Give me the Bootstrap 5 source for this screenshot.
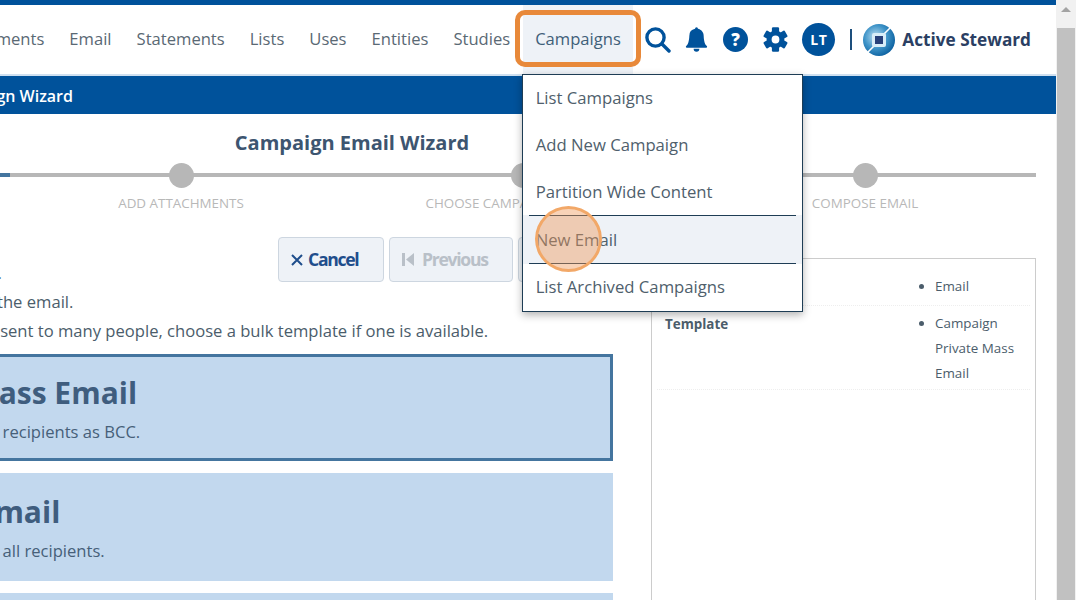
<!DOCTYPE html>
<html lang="en">
<head>
    <meta charset="UTF-8">
    <meta name="viewport" content="width=device-width, initial-scale=1.0">
    <title>Campaign Email Wizard</title>
    <link href="https://cdn.jsdelivr.net/npm/bootstrap@5.3.0/dist/css/bootstrap.min.css" rel="stylesheet">
    <style>
        html, body { height: 100%; overflow: hidden; }
        body { font-family: "Open Sans", "Liberation Sans", sans-serif; font-size: 16.6px; color: #4b5d6b; background: #fff; }
        .app-frame { height: 600px; }
        .app-main { width: 1056px; overflow: hidden; border-top: 5px solid #00529b; }

        /* scrollbar */
        .fake-scroll { width: 20px; background: #f1f1f1; }
        .fake-scroll-arrow { height: 21px; }
        .fake-scroll-arrow::before { content: ""; display: block; margin: 7px auto 0; width: 0; border: 5px solid transparent; border-top: 0; border-bottom-color: #a3a3a3; }
        .fake-scroll-thumb { margin: 0 1px; background: #c1c1c1; }

        /* top nav */
        .top-nav { height: 71px; border-bottom: 2px solid #cfe0f0; background: #fff; }
        .top-links { height: 69px; flex-wrap: nowrap; }
        .top-links .nav-link { height: 71px; display: flex; align-items: center; padding: 0 12.5px 2px; color: #5a6974; white-space: nowrap; }
        .top-links .active-link { background: #eef2f7; color: #3f6079; }
        .orange-ring { position: absolute; left: -8px; top: 5px; width: 126px; height: 57px; border: 5px solid #e8893a; border-radius: 10px; pointer-events: none; }
        .top-tools { padding-right: 25px; }
        .ico-search { width: 26px; height: 26px; margin-left: 12px; margin-right: 14px; }
        .ico-bell { width: 23px; height: 25px; margin-right: 15px; }
        .ico-help { width: 25px; height: 25px; margin-right: 15px; }
        .ico-gear { width: 25px; height: 25px; margin-right: 14px; }
        .user-avatar { width: 33px; height: 33px; border-radius: 50%; background: #00529b; color: #fff; font-size: 14px; font-weight: 700; letter-spacing: .5px; margin-right: 15px; }
        .tool-sep { width: 2px; height: 21px; background: #1d4f7d; margin-right: 11px; }
        .brand-logo { width: 32px; height: 32px; margin-right: 7px; }
        .brand-name { font-size: 17.2px; font-weight: 700; color: #2b3f63; white-space: nowrap; }

        /* dropdown */
        .camp-menu { width: 281px; margin-top: 0 !important; top: 100%; left: -1px; padding: 0; border: 1px solid #1e3d55; border-radius: 0; box-shadow: 0 3px 8px rgba(0,0,0,.3); }
        .camp-menu .dropdown-item { padding: 0 13px; height: 47px; line-height: 46px; color: #4f606c; font-size: 16.7px; }
        .camp-menu .dropdown-divider { margin: 0 6px; border-top: 1px solid #1e3d55; opacity: 1; }
        .camp-item-on { background: #eef2f7; margin: -1px 0 0; position: relative; }
        .camp-item-on .dropdown-item { height: 46.7px; line-height: 47px; }
        .click-spot { position: absolute; left: 12px; top: -9px; width: 67px; height: 66px; border-radius: 50%; border: 3px solid #f2a868; background: rgba(238,150,85,.42); }

        /* wizard */
        .wiz-bar { height: 38px; background: #00529b; color: #fff; font-weight: 600; font-size: 16px; line-height: 40px; margin-left: -62px; white-space: nowrap; }
        .wiz-body { margin-left: -332px; width: 1368px; }
        .wiz-title { font-size: 20px; font-weight: 700; color: #3d5570; text-align: center; padding-top: 14px; line-height: 30px; }
        .wiz-steps { position: relative; margin-top: 5px; }
        .wiz-steps::before { content: ""; position: absolute; left: 0; right: 0; top: 10px; height: 4px; background: #b7b7b7; }
        .wiz-steps::after { content: ""; position: absolute; left: 0; width: 342px; top: 10px; height: 4px; background: #44759f; }
        .wiz-step { flex: 1 1 0; text-align: center; position: relative; z-index: 1; }
        .wiz-dot { width: 25px; height: 25px; border-radius: 50%; background: #b7b7b7; margin: 0 auto; }
        .wiz-label { font-size: 13.4px; line-height: 18px; color: #b8b8b8; margin-top: 6px; white-space: nowrap; }
        .wiz-cols { margin-top: 25px; }
        .wiz-left { width: 798px; margin-left: 147px; flex: none; }
        .wiz-right { width: 385px; margin-left: 38px; flex: none; padding-top: 21px; }

        .wiz-actions { float: right; gap: 5px; }
        .wiz-actions .btn { display: flex; align-items: center; height: 45px; font-size: 17.6px; font-weight: 700; letter-spacing: -1.3px; background: #eef2f7; border: 1px solid #cdd6e0; color: #1f4e8c; padding: 0 12px; border-radius: 4px; gap: 5px; }
        .wiz-actions .btn.is-off { color: #b9c0c8; opacity: 1; }
        .wiz-actions .btn-cancel { width: 106px; }
        .wiz-actions .btn-prev { width: 124px; gap: 8px; }
        .wiz-actions .btn-next { width: 95px; }
        .wiz-intro { padding-top: 21px; margin-left: 6px; line-height: 29px; white-space: nowrap; }

        .tpl-card { background: #c2d8ee; padding: 15px 15px 15px 40px; height: 108px; margin-bottom: 12px; color: #466079; white-space: nowrap; }
        .tpl-card h2 { font-size: 30px; font-weight: 700; color: #3f5d7e; margin: 5px 0 8px; line-height: 38px; }
        .tpl-card p { margin: 0; line-height: 24px; }
        .tpl-card.is-picked { border: 3px solid #44759f; padding: 12px 12px 12px 37px; height: 107px; }
        .tpl-list { margin-top: 9px; }

        .tpl-panel { border: 1px solid #cccccc; border-bottom: 0; padding: 10px 5px; height: 400px; font-size: 13.4px; }
        .tpl-row { padding: 5px 0 3px; border-bottom: 1px dotted #eeeeee; }
        .tpl-row:first-child { padding-bottom: 6px; margin-bottom: 1px; }
        .tpl-row:first-child .tpl-val { margin-top: 0; }
        .tpl-key { width: 258px; flex: none; padding-left: 8px; font-weight: 700; line-height: 25px; color: #4b5d6b; }
        .tpl-val { margin: -1px 0 0; padding-left: 20px; line-height: 25px; }
    </style>
</head>
<body>
    <div class="app-frame d-flex">
        <div class="app-main">
            <div class="top-nav d-flex justify-content-end position-relative">
                <ul class="nav top-links justify-content-end">
                    <li class="nav-item"><a class="nav-link" href="#">Documents</a></li>
                    <li class="nav-item"><a class="nav-link" href="#">Email</a></li>
                    <li class="nav-item"><a class="nav-link" href="#">Statements</a></li>
                    <li class="nav-item"><a class="nav-link" href="#">Lists</a></li>
                    <li class="nav-item"><a class="nav-link" href="#">Uses</a></li>
                    <li class="nav-item"><a class="nav-link" href="#">Entities</a></li>
                    <li class="nav-item"><a class="nav-link" href="#">Studies</a></li>
                    <li class="nav-item position-relative">
                        <a class="nav-link active-link" href="#">Campaigns</a>
                        <span class="orange-ring"></span>
                        <div class="dropdown-menu show camp-menu">
                            <a class="dropdown-item" href="#">List Campaigns</a>
                            <a class="dropdown-item" href="#">Add New Campaign</a>
                            <a class="dropdown-item" href="#">Partition Wide Content</a>
                            <div class="camp-item-on">
                                <hr class="dropdown-divider">
                                <a class="dropdown-item" href="#">New Email</a>
                                <hr class="dropdown-divider">
                                <span class="click-spot"></span>
                            </div>
                            <a class="dropdown-item" href="#">List Archived Campaigns</a>
                        </div>
                    </li>
                </ul>
                <div class="top-tools d-flex align-items-center flex-shrink-0">
                    <svg class="ico-search" viewBox="0 0 26 26" fill="none" stroke="#00529b" stroke-width="3.4" stroke-linecap="round"><circle cx="10.5" cy="10.5" r="8.6"/><path d="M17 17l7 7"/></svg>
                    <svg class="ico-bell" viewBox="0 0 16 17" fill="#00529b"><path d="M8 17a2 2 0 0 0 2-2H6a2 2 0 0 0 2 2zm.995-15.901a1 1 0 1 0-1.99 0A5.002 5.002 0 0 0 3 6c0 1.6-.5 5.9-2 6.8-.6.4-.5 1.4.3 1.4h13.4c.8 0 .9-1 .3-1.4C13.5 11.9 13 7.6 13 6c0-2.42-1.72-4.44-4.005-4.901z"/></svg>
                    <svg class="ico-help" viewBox="0 0 25 25"><circle cx="12.5" cy="12.5" r="12.5" fill="#00529b"/><text x="12.5" y="18.5" text-anchor="middle" font-family="Open Sans" font-weight="800" font-size="17" fill="#fff">?</text></svg>
                    <svg class="ico-gear" viewBox="-12.5 -12.5 25 25" fill="#00529b">
                        <rect x="-3.6" y="-12.3" width="7.2" height="6" rx="1.2"/>
                        <rect x="-3.6" y="-12.3" width="7.2" height="6" rx="1.2" transform="rotate(60)"/>
                        <rect x="-3.6" y="-12.3" width="7.2" height="6" rx="1.2" transform="rotate(120)"/>
                        <rect x="-3.6" y="-12.3" width="7.2" height="6" rx="1.2" transform="rotate(180)"/>
                        <rect x="-3.6" y="-12.3" width="7.2" height="6" rx="1.2" transform="rotate(240)"/>
                        <rect x="-3.6" y="-12.3" width="7.2" height="6" rx="1.2" transform="rotate(300)"/>
                        <circle r="6.4" fill="none" stroke="#00529b" stroke-width="5"/>
                    </svg>
                    <div class="user-avatar d-flex align-items-center justify-content-center">LT</div>
                    <div class="tool-sep"></div>
                    <svg class="brand-logo" viewBox="0 0 32 32">
                        <defs>
                            <radialGradient id="logoFill" cx="40%" cy="40%" r="65%">
                                <stop offset="0" stop-color="#bfe0f2"/>
                                <stop offset=".55" stop-color="#3f94c8"/>
                                <stop offset="1" stop-color="#0a5f9f"/>
                            </radialGradient>
                        </defs>
                        <circle cx="16" cy="16" r="16" fill="url(#logoFill)"/>
                        <path d="M4 29 L12 21 M20 11 L28 3" stroke="#fff" stroke-width="1.6"/>
                        <rect x="9" y="9" width="14" height="14" rx="2" fill="#d8edf8"/>
                        <rect x="12" y="12" width="8" height="8" fill="#27407a"/>
                    </svg>
                    <span class="brand-name">Active Steward</span>
                </div>
            </div>

            <div class="wiz-bar">Campaign Wizard</div>

            <div class="wiz-body">
                <div class="wiz-title">Campaign Email Wizard</div>
                <div class="wiz-steps d-flex">
                    <div class="wiz-step"><div class="wiz-dot"></div><div class="wiz-label">SELECT TEMPLATE</div></div>
                    <div class="wiz-step"><div class="wiz-dot"></div><div class="wiz-label">ADD ATTACHMENTS</div></div>
                    <div class="wiz-step"><div class="wiz-dot"></div><div class="wiz-label">CHOOSE CAMPAIGN TEMPLATE</div></div>
                    <div class="wiz-step"><div class="wiz-dot"></div><div class="wiz-label">COMPOSE EMAIL</div></div>
                </div>

                <div class="wiz-cols d-flex">
                    <div class="wiz-left">
                        <div class="wiz-actions d-flex">
                            <button class="btn btn-cancel" type="button">
                                <svg width="12" height="12" viewBox="0 0 12 12" fill="none" stroke="#1f4e8c" stroke-width="2"><path d="M1 1l10 10M11 1L1 11"/></svg>
                                Cancel
                            </button>
                            <button class="btn btn-prev is-off" type="button">
                                <svg width="12" height="13" viewBox="0 0 12 13" fill="#b9c0c8"><rect x="0" y="0" width="3" height="13"/><path d="M12 0v13L4 6.5z"/></svg>
                                Previous
                            </button>
                            <button class="btn btn-next" type="button">Next</button>
                        </div>
                        <div class="wiz-intro">
                            <div>Step 2: Select template.</div>
                            <div>Choose a template for the email.</div>
                            <div>When the email will be sent to many people, choose a bulk template if one is available.</div>
                        </div>
                        <div class="tpl-list">
                            <div class="tpl-card is-picked">
                                <h2>Private Mass Email</h2>
                                <p>Sends mail with all recipients as BCC.</p>
                            </div>
                            <div class="tpl-card">
                                <h2>Custom Email</h2>
                                <p>Sends the email to all recipients.</p>
                            </div>
                            <div class="tpl-card"></div>
                        </div>
                    </div>
                    <div class="wiz-right">
                        <div class="tpl-panel">
                            <div class="tpl-row d-flex">
                                <div class="tpl-key">Type</div>
                                <ul class="tpl-val"><li>Email</li></ul>
                            </div>
                            <div class="tpl-row d-flex">
                                <div class="tpl-key">Template</div>
                                <ul class="tpl-val"><li>Campaign Private Mass Email</li></ul>
                            </div>
                        </div>
                    </div>
                </div>
            </div>
        </div>
        <div class="fake-scroll flex-shrink-0">
            <div class="fake-scroll-arrow"></div>
            <div class="fake-scroll-thumb h-100"></div>
        </div>
    </div>
    <script src="https://cdn.jsdelivr.net/npm/bootstrap@5.3.0/dist/js/bootstrap.bundle.min.js"></script>
</body>
</html>
